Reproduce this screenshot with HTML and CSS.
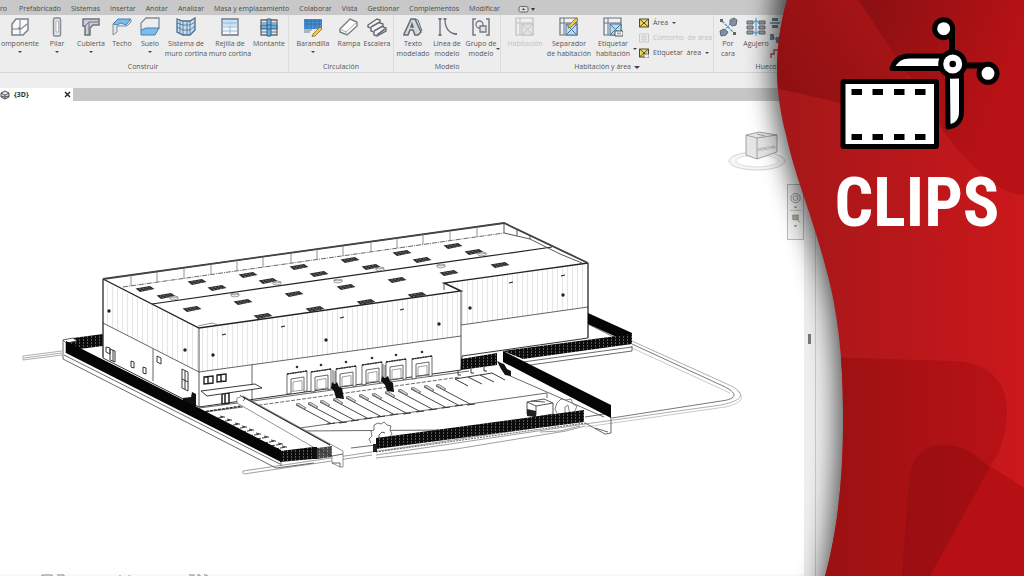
FILE: index.html
```html
<!DOCTYPE html>
<html lang="es">
<head>
<meta charset="utf-8">
<meta name="viewport" content="width=device-width, initial-scale=1">
<title>Clips</title>
<link rel="stylesheet" href="styles.css">
</head>
<body>
<div class="window">
  <nav class="menu">
    <a href="#">ro</a><a href="#">Prefabricado</a><a href="#">Sistemas</a><a href="#">Insertar</a><a href="#">Anotar</a><a href="#">Analizar</a><a href="#">Masa y emplazamiento</a><a href="#">Colaborar</a><a href="#">Vista</a><a href="#">Gestionar</a><a href="#">Complementos</a><a href="#">Modificar</a>
    <button class="menu-toggle" aria-label="Cinta">
      <svg width="18" height="8" viewBox="0 0 18 8"><rect x="1" y="1.5" width="9" height="5.5" rx="1.5" fill="#ddd" stroke="#666"/><path d="M4 5h3L5.500 3zM13 3h4l-2 3z" fill="#333"/></svg>
    </button>
  </nav>

  <div class="ribbon">
    <section class="group">
      <div class="tools">
        <button class="tool first">
          <svg class="icon" viewBox="0 0 20 20"><path d="M2 7l4-5h12v11l-5 5H2z" fill="#f7f8fa" stroke="#7b828b" stroke-width="1.500"/><path d="M2 12h6l2-2V3M10 10v8M8 12l3 0 6-5" fill="none" stroke="#7b828b" stroke-width="1.100"/></svg>
          <span>omponente</span><i class="caret"></i>
        </button>
        <button class="tool mid">
          <svg class="icon" viewBox="0 0 20 20"><rect x="6.500" y="1" width="7" height="18" rx="1.500" fill="#e3e6ea" stroke="#858b93" stroke-width="1.500"/><path d="M9 4h2.500v11H9z" fill="#fff" stroke="#9aa0a8" stroke-width=".7"/></svg>
          <span>Pilar</span><i class="caret"></i>
        </button>
        <button class="tool mid">
          <svg class="icon" viewBox="0 0 20 20"><path d="M2 2h16v6h-6l-3 3v7H4v-9H2z" fill="#c9ced5" stroke="#6d747d" stroke-width="1.500"/><path d="M4 9l4-4h9M8 5v12" fill="none" stroke="#6d747d"/></svg>
          <span>Cubierta</span><i class="caret"></i>
        </button>
        <button class="tool slim">
          <svg class="icon" viewBox="0 0 20 20"><path d="M1 7v11l4-3V9h10l4-4v-2" fill="#e4e7ea" stroke="#858c94"/><path d="M1 7l5-5h13l-5 6-5-2-4 2z" fill="#79bdf0" stroke="#4a7fae"/></svg>
          <span>Techo</span>
        </button>
        <button class="tool slim">
          <svg class="icon" viewBox="0 0 20 20"><path d="M1 13V6l5-5h13v11" fill="#eceef0" stroke="#858c94" stroke-width="1.300"/><path d="M1 13l5-2h13l-4 7H1z" fill="#79bdf0" stroke="#4a7fae"/></svg>
          <span>Suelo</span><i class="caret"></i>
        </button>
        <button class="tool wide">
          <svg class="icon" viewBox="0 0 20 20"><path d="M1 2l6 2h7l5-3v12l-5 5H7l-6-3z" fill="#c4def3" stroke="#4c6d8c" stroke-width="1.300"/><path d="M4 3v13M7 4v14M11 4v14M14 4v14M1 6l6 2h7l5-3M1 10l6 3h7l5-4" fill="none" stroke="#4c6d8c" stroke-width=".8"/></svg>
          <span>Sistema de<br>muro cortina</span>
        </button>
        <button class="tool wide">
          <svg class="icon" viewBox="0 0 20 20"><path d="M2 2h16v16H2z" fill="#f4f7fa" stroke="#70777f" stroke-width="1.300"/><path d="M3 3h6v6H3zM11 3h6v6h-6z" fill="#cce3f5"/><path d="M10 2v16M2 10h16M2 6h16M2 14h16" stroke="#7fb0d8" stroke-width=".8"/></svg>
          <span>Rejilla de<br>muro cortina</span>
        </button>
        <button class="tool mid">
          <svg class="icon" viewBox="0 0 20 20"><path d="M2 3h16v15H2z" fill="#e2edf6" stroke="#616a73" stroke-width="1.300"/><path d="M8 2h4v17H8zM2 8h16v4H2z" fill="#62aee5" stroke="#375f80"/><path d="M2 6h6M12 6h6M2 15h6M12 15h6" stroke="#616a73"/></svg>
          <span>Montante</span>
        </button>
      </div>
      <h2 class="caption">Construir</h2>
    </section>

    <section class="group">
      <div class="tools">
        <button class="tool wide">
          <svg class="icon" viewBox="0 0 20 20"><path d="M1 2h18v10H1z" fill="#4a90cf"/><path d="M1 4h18M1 7h18M4 2v14M8 2v12M12 2v10M16 2v10" stroke="#2f6ca3" stroke-width=".8"/><path d="M2 12v4M6 12v4" stroke="#777"/><path d="M10 17l7-7 2 2-7 7-3 .5z" fill="#f3c94c" stroke="#8a6b24" stroke-width=".8"/></svg>
          <span>Barandilla</span><i class="caret"></i>
        </button>
        <button class="tool slim">
          <svg class="icon" viewBox="0 0 20 20"><path d="M1 12L11 2l7 3v4L8 18l-7-3z" fill="#fff" stroke="#747b83" stroke-width="1.400"/><path d="M1 12l6 3L18 5M7 15v3" fill="none" stroke="#a0a6ad"/></svg>
          <span>Rampa</span>
        </button>
        <button class="tool slim">
          <svg class="icon" viewBox="0 0 20 20"><path d="M1 8l9-6 3 1v3l3 1v3l3 1v3l-9 5-3-1v-3l-3-1v-3l-3-1z" fill="#f5f6f7" stroke="#656c74" stroke-width="1.400"/><path d="M4 10l9-5M7 14l9-5M10 18l8-6" stroke="#656c74" stroke-width="1.600"/></svg>
          <span>Escalera</span>
        </button>
      </div>
      <h2 class="caption">Circulación</h2>
    </section>

    <section class="group">
      <div class="tools">
        <button class="tool mid">
          <svg class="icon" viewBox="0 0 20 20"><path d="M1 17L8 2h4l6 13-3 3h-3l-2-5H7l-2 5H1zM8 10h2L9 7z" fill="#d4d8dd" stroke="#626a73" stroke-width="1.500" fill-rule="evenodd"/><path d="M12 2l3 1 4 11" fill="none" stroke="#626a73"/></svg>
          <span>Texto<br>modelado</span>
        </button>
        <button class="tool mid">
          <svg class="icon" viewBox="0 0 20 20"><path d="M3 2v16M8 2c0 9 3 14 11 15" fill="none" stroke="#70777f" stroke-width="1.400"/><path d="M1.500 1h3v2h-3zM1.500 17h3v2h-3zM6.500 1h3v2h-3zM17 16h3v2h-3z" fill="#70777f"/></svg>
          <span>Línea de<br>modelo</span>
        </button>
        <button class="tool mid">
          <svg class="icon" viewBox="0 0 20 20"><path d="M5 2H2v16h3M15 2h3v16h-3" fill="none" stroke="#737a82" stroke-width="1.500"/><circle cx="8.500" cy="7.500" r="3.500" fill="#eef0f2" stroke="#737a82" stroke-width="1.300"/><path d="M9 9h6v6H9z" fill="#dfe2e6" stroke="#737a82" stroke-width="1.300"/></svg>
          <span>Grupo de<br>modelo</span><i class="caret side"></i>
        </button>
      </div>
      <h2 class="caption">Modelo</h2>
    </section>

    <section class="group">
      <div class="tools">
        <button class="tool wide" disabled>
          <svg class="icon faded" viewBox="0 0 20 20"><use href="#room"/></svg>
          <span>Habitación</span>
        </button>
        <button class="tool wide">
          <svg class="icon" viewBox="0 0 20 20"><g id="room"><path d="M1 1h17v17H1z" fill="#eef1f4" stroke="#6a727b" stroke-width="1.200"/><path d="M5 1v17M1 6h4M5 6h13" stroke="#6a727b"/><path d="M7 7h11v11H7z" fill="#b5dbf6" stroke="#4d7390"/><path d="M7 7l11 11M18 7L7 18" stroke="#4d7390"/></g><path d="M10 8l7-7 2 2-7 7-3 1z" fill="#f3c94c" stroke="#8a6b24" stroke-width=".8"/></svg>
          <span>Separador<br>de habitación</span>
        </button>
        <button class="tool wide">
          <svg class="icon" viewBox="0 0 20 20"><use href="#room"/><path d="M12 14h8v5h-8z" fill="#fff" stroke="#555"/><path d="M15 15.500v2M17 15.500v2" stroke="#555"/></svg>
          <span>Etiquetar<br>habitación</span><i class="caret side"></i>
        </button>
        <div class="stack">
          <button class="row"><svg class="mini" viewBox="0 0 10 10"><path id="area" d="M.5 1h9v8h-9zM.5 1l9 8M9.500 1l-9 8" fill="#f5d95a" stroke="#4c4a3a"/></svg>Área<i class="caret"></i></button>
          <button class="row" disabled><svg class="mini faded" viewBox="0 0 10 10"><path d="M.5 1h9v8h-9zM3 3h4v4H3zM3 3l4 4" fill="#eee" stroke="#888"/></svg>Contorno&nbsp; de área</button>
          <button class="row"><svg class="mini" viewBox="0 0 10 10"><use href="#area"/><path d="M5 6h5v4H5z" fill="#eee" stroke="#555" stroke-width=".7"/></svg>Etiquetar&nbsp; área<i class="caret"></i></button>
        </div>
      </div>
      <h2 class="caption">Habitación y área <i class="caret big"></i></h2>
    </section>

    <section class="group last">
      <div class="tools">
        <button class="tool slim">
          <svg class="icon" viewBox="0 0 20 20"><path d="M12 3l4-2 3 2-1 5-4 1-2-2zM2 14l4-2 4 3-2 3-5 1z" fill="#8b9199" stroke="#5f666e"/><path d="M4 4l13 13M16 3L4 16" stroke="#4a90c8" stroke-width="1.200" stroke-dasharray="3 1"/><path d="M2 2h3v3H2zM15 15h3v3h-3z" fill="#666"/></svg>
          <span>Por<br>cara</span>
        </button>
        <button class="tool slim">
          <svg class="icon" viewBox="0 0 20 20"><path d="M1 4h6v3H1zM1 9h6v3H1zM1 14h6v3H1zM13 4h6v3h-6zM13 9h6v3h-6zM13 14h6v3h-6z" fill="#9aa0a8" stroke="#5f666e"/><path d="M10 1v18M7 6l3-3 3 3M7 14l3 3 3-3" fill="none" stroke="#62a5d5" stroke-width="1.200"/></svg>
          <span>Agujero</span>
        </button>
        <div class="stack narrow">
          <button class="row" aria-label="Muro"><svg class="mini" viewBox="0 0 10 10"><path d="M0 5h10" stroke="#3f8cc5" stroke-width="1.500"/><path d="M2 0h6v3H2zM2 7h6v3H2z" fill="#777"/></svg></button>
          <button class="row" aria-label="Vertical"><svg class="mini" viewBox="0 0 10 10"><path d="M0 1h4v6H0zM6 4h4v6H6z" fill="#7c838b"/><path d="M2 2l6 7" stroke="#3f6fa0"/></svg></button>
          <button class="row" aria-label="Buhardilla"><svg class="mini" viewBox="0 0 10 10"><path d="M1 10V6h3V2h6" fill="none" stroke="#b04c4c" stroke-width="1.300"/></svg></button>
        </div>
      </div>
      <h2 class="caption">Hueco</h2>
    </section>
  </div>

  <div class="options"></div>

  <div class="docs">
    <div class="doc">
      <svg class="mini" viewBox="0 0 10 10"><path d="M1 3l4-2 4 2v4L5 9 1 7zM1 3l4 2 4-2M5 5v4M1 6l4 1 4-1" fill="#ddd" stroke="#555"/></svg>
      <b>{3D}</b>
      <button class="close" aria-label="Cerrar"><svg width="7" height="7" viewBox="0 0 7 7"><path d="M1 1l5 5M6 1L1 6" stroke="#222" stroke-width="1.400"/></svg></button>
    </div>
  </div>

  <main class="workspace">
    <div class="canvas">
      <svg class="model" viewBox="0 101 804 475" preserveAspectRatio="xMinYMin meet" role="img" aria-label="Modelo 3D de la nave">
        <defs>
          <pattern id="panel" width="5" height="10" patternUnits="userSpaceOnUse"><path d="M2.500 0v10" stroke="#dedede" stroke-width=".8"/></pattern>
          <pattern id="mesh" width="4" height="3" patternUnits="userSpaceOnUse"><path d="M0 0h4v3H0z" fill="#0c0c0c"/><path d="M3.500 0v2" stroke="#777" stroke-width=".7"/></pattern>
          <g id="sky"><path d="M-9.500-.5L5-3 9.500 0-5 3z" fill="#2a2a2a"/><path d="M-6 .2L5-1.500M-4 1.500L7-.2" stroke="#999" stroke-width=".6" stroke-dasharray="2 1.500"/></g>
          <path id="vent" d="M-4-1l5-1 3 1v2l-5 1-3-1zM-4-1l3 1 5-1" fill="#fff" stroke="#777" stroke-width=".7"/>
          <g id="dock"><path d="M0 2l20-3v20l-3 .5V5L4 7v14.500l-4 .5z" fill="#fff" stroke="#444" stroke-width=".8"/><path d="M6 19V10l9-1.500V18M4 19.500L17 18" fill="none" stroke="#777" stroke-width=".7"/><path d="M0 2l20-3" stroke="#222" stroke-width="1.300" stroke-dasharray="2 .6"/><circle cx="10" cy="-5" r="1.300" fill="#333"/></g>
          <g id="bay"><path d="M0 0l35 18.500" stroke="#333" stroke-width=".9"/><path d="M0-1l3-.5 7 4.500-2 1z" fill="#ddd" stroke="#666" stroke-width=".8"/><path d="M31 19l8-1" stroke="#333"/></g>
          <g id="stall"><path d="M0 2l13-2M8-1l4 1" stroke="#222" stroke-width=".9" stroke-dasharray="5 1"/></g>
        </defs>

        <g fill="none" stroke="#999" stroke-width=".8">
          <path d="M62 351L23 356v4l39-5M24 358l38-5"/>
          <path d="M632 341l95 43c20 9 18 16-6 21L585 424" />
          <path d="M632 344l91 42c15 7 15 13-2 15l-109 17" stroke="#555"/>
          <path d="M632 348l98 45M585 427l140-20c18-4 20-10 12-16" stroke="#bbb"/>
          <path d="M243 471l332-49M244 474l128-19M243 471v3" stroke="#888"/>
          <path d="M376 458l80-9 110-18 19-5M376 455l209-31M540 432l20-1 20-5" stroke="#888"/>
          <path d="M376 452l209-29" stroke="#444" stroke-dasharray="2 1"/>
        </g>
        <g fill="none" stroke="#444" stroke-width=".8">
          <path d="M63 340v19l213 109M64 355l216 109M66 353v-13M276 468l38-5M281 462v4"/>
          <path d="M199 408l54-7 216-30M205 412l38-5" />
          <path d="M253 406l207-29" stroke-dasharray="4 1.500"/>
          <path d="M300 428l247-35M300 431l145-1M508 375l96 42M547 393v5M351 448l25-3" />
          <path d="M588 324l28 14M530 365l102-14v-5M523 362l109-15M585 417l26-4M585 423l20 11 6-1v-16M595 428l13 4"/>
        </g>

        <path d="M63 340l10-2 30-4v12l-24 3z" fill="url(#mesh)"/>
        <path d="M63 340l10-2 4 3-11 2z" fill="#fff" stroke="#444" stroke-width=".8"/>

        <g fill="#fff" stroke="#333" stroke-width="1">
          <path d="M103 279l401-56 84 40v75l-126 18-1 14-262 37-96-49z"/>
        </g>
        <path d="M103 281l96 48v43l-96-49zM199 329l262-37v44l-262 36zM461 292l-16-8 142-20v43l-126 18z" fill="url(#panel)"/>
        <g fill="none" stroke="#222" stroke-width=".9">
          <path d="M103 279l96 49 262-37-17-8 144-20" stroke-width="1.400"/>
          <path d="M103 279l401-56 84 40" stroke-width="1.800" stroke="#444"/>
          <path d="M152 304l400-57" stroke-width="1.200"/>
          <path d="M123 287l381-54" stroke="#555" stroke-dasharray="5 1 1 1"/>
          <path d="M504 223v10l26 6 30 15 22 9M517 230v6M530 236v3M444 283v7M103 279v78M199 328v79M461 291v79M588 263v75" stroke="#444"/>
          <path d="M103 323l96 49 262-36M461 325l127-18M153 349v32M252 365v40" stroke-width=".7"/>
          <path d="M198 326l14-3 6 2" stroke="#888"/>
          <path d="M131 275v11M157 272v10M184 268v10M211 264v11M237 260v11M263 257v10M291 253v10M317 249v10M343 246v10M371 242v10M397 238v10M423 234v10M450 231v10M477 227v10" stroke="#777" stroke-width=".8"/>
        </g>

        <use href="#sky" x="145" y="289"/><use href="#sky" x="166" y="296"/><use href="#sky" x="197" y="282"/><use href="#sky" x="217" y="288"/><use href="#sky" x="248" y="275"/><use href="#sky" x="268" y="281"/><use href="#sky" x="299" y="267"/><use href="#sky" x="319" y="274"/><use href="#sky" x="350" y="260"/><use href="#sky" x="371" y="267"/><use href="#sky" x="402" y="253"/><use href="#sky" x="422" y="260"/><use href="#sky" x="453" y="246"/><use href="#sky" x="474" y="252"/>
        <use href="#sky" x="192" y="309"/><use href="#sky" x="243" y="302"/><use href="#sky" x="294" y="294"/><use href="#sky" x="346" y="287"/><use href="#sky" x="397" y="280"/><use href="#sky" x="449" y="273"/><use href="#sky" x="500" y="265"/><use href="#sky" x="263" y="316"/><use href="#sky" x="315" y="309"/><use href="#sky" x="366" y="302"/><use href="#sky" x="417" y="295"/>
        <use href="#vent" x="174" y="298"/><use href="#vent" x="235" y="295"/><use href="#vent" x="277" y="283"/><use href="#vent" x="338" y="281"/><use href="#vent" x="380" y="269"/><use href="#vent" x="441" y="266"/><use href="#vent" x="482" y="254"/>

        <g fill="#222">
          <circle cx="109" cy="311" r="1.700"/><circle cx="185" cy="350" r="1.700"/><circle cx="213" cy="355" r="1.700"/><circle cx="326" cy="340" r="1.700"/><circle cx="439" cy="324" r="1.700"/><circle cx="470" cy="308" r="1.700"/><circle cx="563" cy="295" r="1.700"/>
        </g>
        <path d="M222 335l4-1M281 327l4-1M340 318l4-1M400 310l4-1M509 283l4-1M561 276l4-1" stroke="#222" stroke-width="1.200"/>
        <g fill="#fff" stroke="#222" stroke-width=".9">
          <path d="M106 347l4 1v6l-4-2zM110 349l5 2v11l-5-2zM113 350v11M131 361l3 1v6l-3-1zM143 367l3 1v6l-3-1zM157 356l4 2v6l-4-2zM182 369l6 3v19l-6-3zM185 371v18M182 379l6 3"/>
          <path d="M204 377l9-1v7l-9 1zM208 377v7M217 375l9-1v7l-9 1zM221 375v7" stroke-width="1.400"/>
          <path d="M222 394l7-1v10l-7 1zM225 394v10" stroke-width="1.500"/>
          <path d="M201 391l54-7 7 4-55 8z" />
        </g>
        <path d="M183 398l8-1 1-5 4 2v13l-13-5z" fill="#111"/>

        <use href="#dock" x="287" y="372"/><use href="#dock" x="311" y="370"/><use href="#dock" x="336" y="367"/><use href="#dock" x="362" y="363"/><use href="#dock" x="386" y="360"/><use href="#dock" x="412" y="357"/>
        <use href="#bay" x="296" y="405"/><use href="#bay" x="308" y="404"/><use href="#bay" x="320" y="402"/><use href="#bay" x="333" y="400"/><use href="#bay" x="346" y="398"/><use href="#bay" x="359" y="396"/><use href="#bay" x="372" y="395"/><use href="#bay" x="385" y="393"/><use href="#bay" x="398" y="391"/><use href="#bay" x="411" y="389"/><use href="#bay" x="424" y="387"/><use href="#bay" x="436" y="386"/>
        <path d="M332 382l3 2 2-2 2 5 3 1 2 11-8-1-2-7-3-3zM382 376l3 2 3-2 2 5 3 2 1 9-7-1-2-6-4-4zM497 361l4 2 3 1 3 5 4 2v5l-6-1-4-6z" fill="#111"/>
        <path d="M333 370v14M383 364v14M335 371v12M385 365v12" stroke="#444" stroke-width=".8"/>
        <path d="M455 379l13 7M468 377l14 7M480 375l14 7M492 373l13 7M455 379l37-6M458 371v4h3M471 369v4h3M484 367v4h3" fill="none" stroke="#222" stroke-width=".9"/>

        <use href="#stall" x="212" y="417"/><use href="#stall" x="219" y="420"/><use href="#stall" x="227" y="424"/><use href="#stall" x="234" y="427"/><use href="#stall" x="241" y="430"/><use href="#stall" x="248" y="434"/><use href="#stall" x="256" y="437"/><use href="#stall" x="263" y="441"/><use href="#stall" x="270" y="444"/><use href="#stall" x="274" y="447"/>
        <path d="M202 412l40-6" stroke="#222" stroke-width="1.300" stroke-dasharray="3 1"/>

        <path d="M237 398l6-2 100 55v16h-3l-8-4v-7l-19-9-76-44z" fill="#fff" stroke="#666" stroke-width=".7"/>
        <path d="M240 395l5 4-2 2M332 456l11-2M332 463h8v4" fill="none" stroke="#444" stroke-width=".8"/>
        <path d="M243 397l87 48" stroke="#222" stroke-width="1.200"/>

        <path d="M66 341l133 67 82 42v12L66 353z" fill="#050505"/>
        <path d="M280 451l33-4v12l-33 3z" fill="url(#mesh)"/>
        <path d="M313 447h4v12h-4z" fill="#111"/>
        <path d="M317 448l15-2v11l-15 2z" fill="url(#mesh)" opacity=".75"/>

        <path d="M588 313l44 20v11l-44-20z" fill="#050505"/>
        <path d="M461 359l36-6v12l-36 5zM503 351l129-17v10l-109 15z" fill="url(#mesh)"/>
        <path d="M503 351l108 54v13L503 362z" fill="#050505"/>

        <g fill="#fff" stroke="#444" stroke-width=".9">
          <path d="M527 402l17-3 9 4v11l-17 3-9-3zM527 402l9 4 17-3M536 406v9M531 401l14 1"/>
          <path d="M557 413l-2-4 2-6 4-4 5 1 5-1 2 5 4 2-2 5 2 4M565 415v-8l3-2 2 10" fill="none" stroke="#777"/>
          <path d="M371 443l-2-4 3-3-1-5 3-1 0-5 4-2 3 1 3-2 3 3 4 1-1 4 2 4-2 3 1 4-4 0-2 4-6 1" stroke="#666"/>
          <path d="M379 444v-9l3-3 3 1" fill="none"/>
        </g>
        <path d="M376 438l208-28v12l-208 27z" fill="url(#mesh)"/>
        <path d="M373 444h4v8h-4zM527 409l9 2v6l-9-1z" fill="#222"/>
      </svg>

      <svg class="cube" viewBox="0 0 60 46" role="img" aria-label="Cubo de vistas">
        <ellipse cx="30" cy="31" rx="28" ry="9" fill="#f6f6f6" stroke="#d0d0d0"/>
        <ellipse cx="30" cy="31" rx="21" ry="6" fill="#fff" stroke="#ddd"/>
        <path d="M19 5l13-3 18 3v17l-20 7-11-4z" fill="#e6e6e6" stroke="#999" stroke-width=".9"/>
        <path d="M19 5l11 3 20-3M30 8v21M30 4l8 2" fill="none" stroke="#999" stroke-width=".9"/>
        <text x="31" y="21" font-size="4" transform="rotate(-9 31 21)">DERECHA</text>
      </svg>
      <div class="navbar">
        <svg viewBox="0 0 16 56"><circle cx="8" cy="14" r="5" fill="#eee" stroke="#999"/><circle cx="8" cy="14" r="2.500" fill="none" stroke="#999"/><path d="M2 27h12" stroke="#bbb"/><path d="M6 23h4l-2 2zM6 43h4l-2 2z" fill="#888"/><path d="M5 32h6v5H5z" fill="#9fba8c" stroke="#777" stroke-width=".6"/><path d="M9 36l4 4" stroke="#888"/></svg>
      </div>
      <div class="viewbar">
        <svg width="170" height="8" viewBox="0 0 170 8" fill="none" stroke="#888"><path d="M1 1h10v8H1zM16 1h7v8M25 8l3-6 3 6M53 8V3M66 8V2M79 8V1M84 8c0-8 9-8 9 0M104 8V2M116 3h6M132 3h7M148 1h5v7M156 1h3v7M163 1h3v7"/></svg>
      </div>
    </div>
    <div class="splitter"><i class="grip"></i></div>
    <div class="dockarea"></div>
  </main>

  <aside class="banner">
    <svg class="wave" viewBox="724 0 300 576" preserveAspectRatio="none" aria-hidden="true">
      <defs>
        <linearGradient id="base" gradientUnits="userSpaceOnUse" x1="780" y1="0" x2="1024" y2="0"><stop offset="0" stop-color="#a51719"/><stop offset="1" stop-color="#cb181c"/></linearGradient>
        <linearGradient id="topl" gradientUnits="userSpaceOnUse" x1="780" y1="90" x2="890" y2="20"><stop offset="0" stop-color="#8e1012"/><stop offset="1" stop-color="#a81517"/></linearGradient>
        <linearGradient id="topr" gradientUnits="userSpaceOnUse" x1="880" y1="0" x2="1024" y2="50"><stop offset="0" stop-color="#8e1012"/><stop offset="1" stop-color="#b91216"/></linearGradient>
        <linearGradient id="low" gradientUnits="userSpaceOnUse" x1="830" y1="0" x2="1010" y2="0"><stop offset="0" stop-color="#9c1113"/><stop offset="1" stop-color="#b91216"/></linearGradient>
        <clipPath id="edge"><path d="M787 0C774 45 774 90 786 135C796 180 812 215 825 265C838 310 843 360 843 410C844 470 838 530 825 576H1024V0Z"/></clipPath>
        <filter id="soft" filterUnits="userSpaceOnUse" x="700" y="-40" width="360" height="660"><feGaussianBlur stdDeviation="13"/></filter>
      </defs>
      <path d="M780-40C768 45 768 90 780 135C790 180 806 215 819 265C832 310 837 360 837 410C838 470 832 530 815 620H1060V-40Z" fill="#000" opacity=".66" filter="url(#soft)"/>
      <g clip-path="url(#edge)">
        <path d="M770 0h254v576H770z" fill="url(#base)"/>
        <path d="M770 0h88l52 72-20 42-115-26z" fill="url(#topl)"/>
        <path d="M858 0h166v195c-24-2-40-16-72-52-20-26-34-54-47-73z" fill="url(#topr)"/>
        <path d="M820 357l135 4c32 1 52 20 52 49 0 30-10 46-17 57l-60 109H820z" fill="url(#low)"/>
        <path d="M990 466l34 22v88h-94z" fill="#b61014"/>
        <path d="M902 576l7-96c3-25 16-37 41-35 16 2 28 12 40 22l-60 109z" fill="#800a0c" opacity=".35"/>
      </g>
    </svg>
    <div class="brand">
      <svg class="clip-icon" viewBox="840 16 162 134" aria-hidden="true">
        <rect x="843" y="81.500" width="93.500" height="65" rx="1" fill="#fff" stroke="#000" stroke-width="5"/>
        <path d="M851.500 89h10.500v6h-10.500zM872.500 89h10.500v6h-10.500zM894 89h10.500v6H894zM915 89h10.500v6H915zM851.500 134h10.500v6h-10.500zM872.500 134h10.500v6h-10.500zM894 134h10.500v6H894zM915 134h10.500v6H915z"/>
        <path d="M952 30v30M955 65.500h30" stroke="#000" stroke-width="6"/>
        <g fill="#fff" stroke="#000" stroke-width="5" stroke-linejoin="round">
          <path d="M892 68.500C895 59 902 56 909 56H944V68.500ZM947.500 76H961.500V112C961.500 120 957 126 948 127Z"/>
          <circle cx="943.700" cy="28.700" r="9"/><circle cx="988" cy="73.300" r="9"/>
          <circle cx="952.700" cy="64" r="12"/>
        </g>
        <circle cx="952.700" cy="64" r="3.300"/>
      </svg>
      <h1>CLIPS</h1>
    </div>
  </aside>
</div>
</body>
</html>
```
FILE: styles.css
```css
* { box-sizing: border-box; }

body {
  margin: 0;
  font: 7px/10px "Open Sans", "Noto Sans", sans-serif;
  color: #555;
}

button {
  margin: 0;
  padding: 0;
  border: 0;
  background: none;
  font: inherit;
  color: inherit;
}

.window {
  position: relative;
  display: flex;
  flex-direction: column;
  height: 100vh;
  overflow: hidden;
  background: #fff;
}

.menu {
  display: flex;
  flex: none;
  align-items: center;
  gap: 10px;
  height: 15px;
  padding-top: 3px;
  background: #c8c8c8;
  white-space: nowrap;
}
.menu a { color: #4c4c4c; text-decoration: none; }
.menu a:first-child { padding-right: 2px; }
.menu-toggle { display: flex; padding-left: 8px; }

.ribbon {
  display: flex;
  flex: none;
  background: #ededed;
  border-bottom: 1px solid #d6d6d6;
}
.group {
  display: flex;
  flex: none;
  flex-direction: column;
  padding: 2px 2px 0;
  border-right: 1px solid #dcdcdc;
}
.group:first-child { padding-left: 0; }
.group.last { width: 106px; padding-left: 0; border: 0; }
.tools { display: flex; height: 45px; }
.tool {
  position: relative;
  display: flex;
  flex: none;
  flex-direction: column;
  align-items: center;
  white-space: nowrap;
}
.tool.first { width: 40px; }
.tool.slim { width: 28px; }
.tool.mid { width: 34px; }
.tool.wide { width: 44px; }
.icon { flex: none; width: 20px; height: 20px; margin-bottom: 2px; }
.mini { flex: none; width: 10px; height: 10px; }
.faded { opacity: .35; filter: grayscale(1); }
button:disabled { color: #c0c0c0; }

.caret {
  display: inline-block;
  flex: none;
  border: 2px solid transparent;
  border-top-color: #444;
  border-bottom: 0;
}
.tool > .caret { margin-top: 2px; }
.tool > .caret.side { position: absolute; right: -2px; bottom: 12px; }
.caret.big { border-width: 3px 3px 0; margin-left: 1px; }

.caption {
  margin: 0;
  font-size: 7px;
  font-weight: 400;
  text-align: center;
}

.stack {
  display: flex;
  flex-direction: column;
  gap: 5px;
  width: 76px;
  padding: 1px 0 0 4px;
}
.stack.narrow { width: 16px; padding-left: 0; }
.row { display: flex; align-items: center; gap: 4px; white-space: nowrap; }

.options { flex: none; height: 15px; background: #eee; }

.docs { display: flex; flex: none; height: 13px; background: #c6c6c6; }
.doc {
  display: flex;
  align-items: center;
  gap: 4px;
  width: 73px;
  padding-right: 2px;
  background: #fff;
  color: #333;
}
.close { display: flex; margin-left: auto; }

.workspace { display: flex; flex: 1; min-height: 0; }
.canvas { position: relative; flex: 1; min-width: 0; overflow: hidden; }
.model { display: block; width: 100%; height: 100%; }
.cube { position: absolute; top: 29px; right: 17px; width: 60px; height: 46px; }
.cube text { font-family: "Open Sans", sans-serif; fill: #777; }
.navbar {
  position: absolute;
  top: 83px;
  right: 0;
  width: 17px;
  height: 56px;
  border: 1px solid #bbb;
  background: #f4f4f4;
}
.navbar svg { display: block; }
.viewbar {
  position: absolute;
  right: 0;
  bottom: 0;
  left: 0;
  height: 2px;
  padding-left: 41px;
  overflow: hidden;
  background: #f8f8f8;
}
.viewbar svg { display: block; }
.splitter {
  display: flex;
  flex: none;
  align-items: center;
  justify-content: center;
  width: 12px;
  background: #eee;
  border-right: 1px solid #ccc;
}
.grip { width: 3px; height: 10px; background: #777; }
.dockarea { flex: none; width: 208px; background: #eee; }

.banner {
  position: absolute;
  top: 0;
  right: 0;
  bottom: 0;
  width: 300px;
  pointer-events: none;
}
.wave { position: absolute; width: 100%; height: 100%; }
.brand {
  position: relative;
  display: flex;
  flex-direction: column;
  align-items: center;
  padding: 16px 22px 0 108px;
}
.clip-icon { align-self: flex-end; width: 162px; height: 134px; }
.brand h1 {
  margin: 19px 0 0;
  font: 700 68px/68px "Roboto Condensed", "Liberation Sans Narrow", Roboto, sans-serif;
  color: #fff;
}
```
